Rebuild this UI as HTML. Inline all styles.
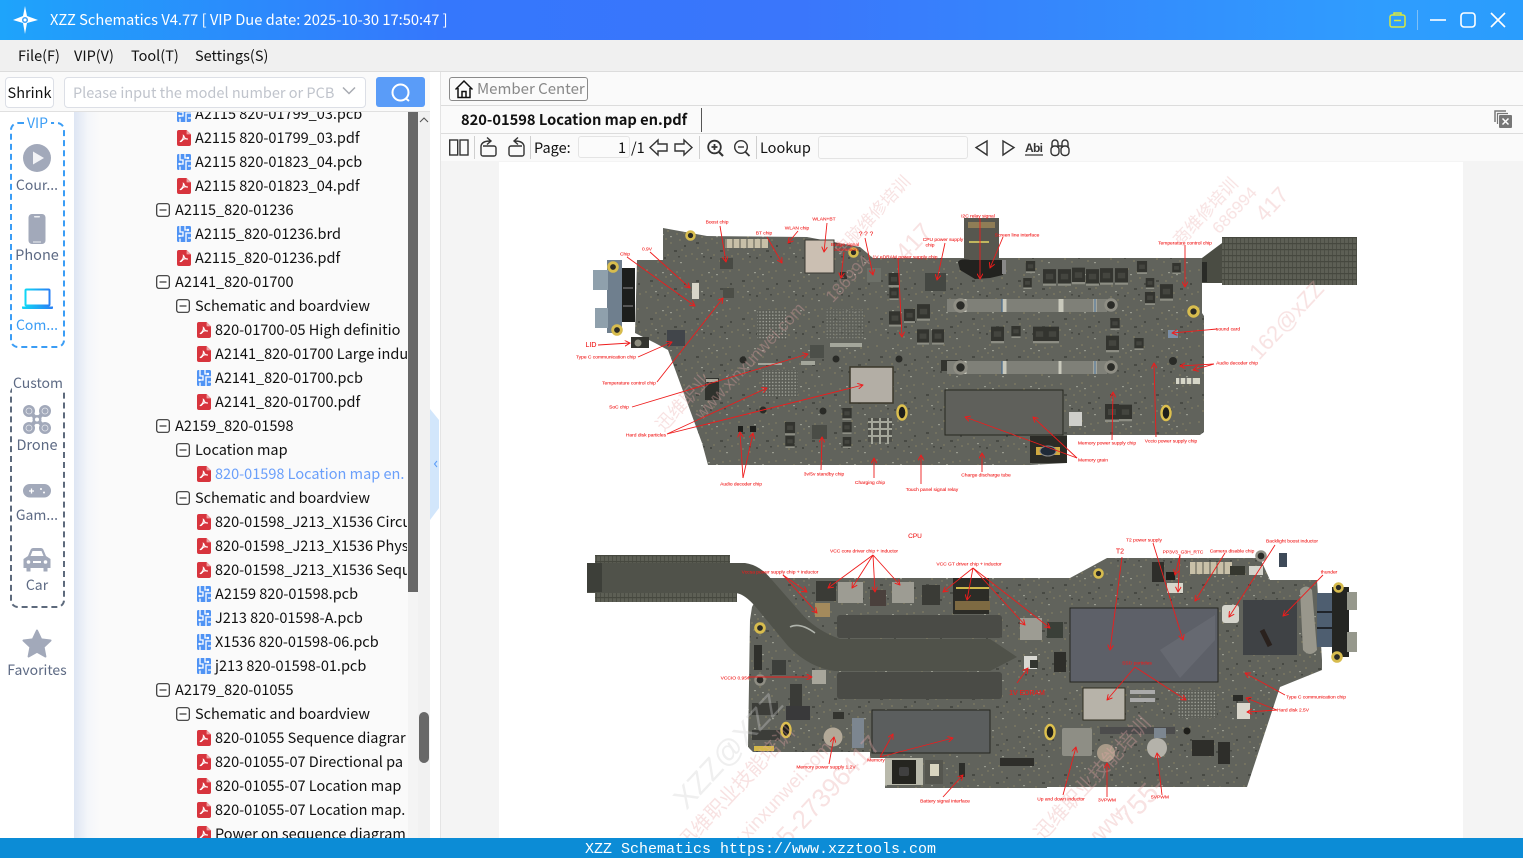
<!DOCTYPE html>
<html lang="en"><head><meta charset="utf-8"><title>XZZ Schematics</title>
<style>
html,body{margin:0;padding:0;width:1523px;height:858px;overflow:hidden;background:#fafafa}
body{font-family:"Noto Sans CJK SC","Liberation Sans",sans-serif;position:relative;font-size:14.5px;color:#111}
.a{position:absolute;white-space:nowrap}
.tree{position:absolute;left:0;top:112px;width:407px;height:726px;overflow:hidden}
.r{position:absolute;height:24px;line-height:24px;white-space:nowrap}
.r svg{position:absolute;top:4px;left:-18px}
.l0{left:175px}.l1{left:195px}.l2{left:215px}
.sl{position:absolute;width:74px;text-align:center;left:0;color:#5d6a84;font-size:14px;line-height:18px}
.tl{font-family:"Liberation Sans",sans-serif;fill:#f01c1c;stroke:#f01c1c;stroke-width:.08;font-size:4.9px;text-anchor:middle}
.wm{font-family:"Liberation Sans","Noto Sans CJK SC",sans-serif;fill:#e9a9a9;opacity:.34}
.ar{stroke:#ee1c1c;stroke-width:.9;marker-end:url(#ah);fill:none}
.ic{stroke:#333;fill:none;stroke-width:1.4}
</style></head><body>
<svg width="0" height="0" style="position:absolute"><defs>
<symbol id="pdf" viewBox="0 0 14 16"><path d="M2 0H9.6L14 4.4V14a2 2 0 0 1-2 2H2a2 2 0 0 1-2-2V2a2 2 0 0 1 2-2z" fill="#d7343d"/><path d="M9.6 0V4.4H14z" fill="#f0a0a4"/><path d="M6.4 5.5c.2 2-1 4.5-3 6 .8.6 2-1.500 3.100-2.300 1-.4 3-.6 4.300-.1-1.600.2-3.300-1-4-3.300z" fill="none" stroke="#fff" stroke-width="1.100"/></symbol>
<symbol id="pcb" viewBox="0 0 14 16"><rect width="14" height="16" rx="1.500" fill="#4f93f4"/><path d="M3 0V6H6V10H2M3 16V12.500M8 0V4H11M9 16V7H14M11 12H14" fill="none" stroke="#fff" stroke-width="1.300"/><circle cx="11" cy="4" r="1.200" fill="#fff"/><circle cx="2.500" cy="10" r="1.200" fill="#fff"/></symbol>
<symbol id="box" viewBox="0 0 14 14"><rect x=".7" y=".7" width="12.600" height="12.600" rx="2.200" fill="#fff" stroke="#333" stroke-width="1.200"/><path d="M3.500 7H10.500" stroke="#333" stroke-width="1.200"/></symbol>
<marker id="ah" viewBox="0 0 10 10" refX="9" refY="5" markerWidth="6" markerHeight="6" orient="auto" markerUnits="userSpaceOnUse"><path d="M0 0L9 5L0 10" fill="none" stroke="#ee1c1c" stroke-width="1.600"/></marker>
<pattern id="tx1" width="46" height="38" patternUnits="userSpaceOnUse">
<rect width="46" height="38" fill="#61635c"/>
<g fill="#c4b672"><circle cx="3" cy="4" r=".5"/><circle cx="12" cy="9" r=".5"/><circle cx="24" cy="3" r=".5"/><circle cx="36" cy="12" r=".5"/><circle cx="42" cy="28" r=".5"/><circle cx="18" cy="22" r=".5"/><circle cx="7" cy="31" r=".5"/><circle cx="30" cy="33" r=".5"/><circle cx="27" cy="15" r=".45"/><circle cx="14" cy="34" r=".45"/><circle cx="40" cy="5" r=".45"/><circle cx="8" cy="20" r=".45"/><circle cx="33" cy="6" r=".45"/><circle cx="22" cy="11" r=".45"/><circle cx="38" cy="22" r=".45"/><circle cx="24" cy="27" r=".45"/><circle cx="2" cy="26" r=".45"/><circle cx="16" cy="15" r=".45"/></g>
<g fill="#484a44"><rect x="6" y="14" width="3" height="2"/><rect x="30" y="22" width="3" height="2"/><rect x="20" y="29" width="2" height="2"/><rect x="40" y="17" width="2" height="2"/><rect x="13" y="28" width="2" height="1.500"/><rect x="34" y="28" width="2" height="1.500"/></g>
<g fill="#989a8e"><rect x="26" y="8" width="2" height="1.200"/><rect x="11" y="25" width="2" height="1.200"/><rect x="36" y="34" width="2" height="1.200"/><rect x="18" y="6" width="2" height="1.200"/></g>
</pattern>
<pattern id="bga" width="3.200" height="3.200" patternUnits="userSpaceOnUse"><rect width="3.200" height="3.200" fill="#5c5e57"/><circle cx="1.600" cy="1.600" r=".75" fill="#a4a69c"/></pattern>
<pattern id="fin" width="4" height="6" patternUnits="userSpaceOnUse"><rect width="4" height="6" fill="#5d5f55"/><rect width="1" height="6" fill="#4c4e45"/><rect y="3" width="4" height="1.200" fill="#46483f"/></pattern>
<symbol id="mos" viewBox="0 0 14 18"><rect width="14" height="18" fill="#33342f"/><rect width="14" height="2.500" y="15.500" fill="#8d8e84"/><rect x="3" y="5" width="8" height="6" fill="#44453f"/></symbol>
<symbol id="rng" viewBox="0 0 10 10"><circle cx="5" cy="5" r="3.600" fill="#2a2a26" stroke="#d7bc4e" stroke-width="2.400"/></symbol>
<symbol id="scr" viewBox="0 0 10 10"><circle cx="5" cy="5" r="4.800" fill="#8f8e84"/><circle cx="5" cy="5" r="2.800" fill="#2b2c28"/></symbol>
</defs></svg>

<!-- title bar -->
<div class="a" style="left:0;top:0;width:1523px;height:40px;background:linear-gradient(90deg,#1ea4fb 0,#3577fc 440px,#3a76fb 800px,#2f9dfe 1380px,#2a9dfd 1523px)"></div>
<svg class="a" style="left:12px;top:6px" width="27" height="28" viewBox="0 0 27 28"><path d="M13 0L15 10 26 14 15 17 13 28 11 17 1 14 11 10z" fill="#fff"/><circle cx="13" cy="14" r="3" fill="#3aa0f8"/><circle cx="13" cy="14" r="1.500" fill="#fff"/></svg>
<div class="a" style="left:50px;top:10px;color:#fff;font-size:14.7px;line-height:20px">XZZ Schematics V4.77 [ VIP Due date: 2025-10-30 17:50:47 ]</div>
<svg class="a" style="left:1388px;top:10px" width="20" height="20" viewBox="0 0 20 20" fill="none" stroke="#d8e83e" stroke-width="1.500"><rect x="2" y="5" width="15" height="12" rx="2"/><path d="M6 5V3h7v2M6 10.500h7"/></svg>
<div class="a" style="left:1417px;top:10px;width:1px;height:20px;background:#7fc0f6"></div>
<svg class="a" style="left:1428px;top:10px" width="85" height="20" viewBox="0 0 85 20" fill="none" stroke="#fff" stroke-width="1.600"><path d="M2 10H18"/><rect x="33" y="3" width="14" height="14" rx="3"/><path d="M63 3L77 17M77 3L63 17"/></svg>

<!-- menu -->
<div class="a" style="left:0;top:40px;width:1523px;height:31px;background:#f0f0f0;border-bottom:1px solid #dcdcdc"></div>
<div class="a" style="left:18px;top:46px;line-height:20px;font-size:14.500px">File(F)</div>
<div class="a" style="left:74px;top:46px;line-height:20px;font-size:14.500px">VIP(V)</div>
<div class="a" style="left:131px;top:46px;line-height:20px;font-size:14.500px">Tool(T)</div>
<div class="a" style="left:195px;top:46px;line-height:20px;font-size:14.500px">Settings(S)</div>

<!-- left toolbar -->
<div class="a" style="left:0;top:72px;width:431px;height:39px;background:#fafafa;border-bottom:1px solid #e0e0e0"></div>
<div class="a" style="left:5px;top:77px;width:47px;height:29px;border:1px solid #dcdfe6;border-radius:4px;background:#fff;text-align:center;line-height:29px;font-size:14.500px">Shrink</div>
<div class="a" style="left:64px;top:77px;width:300px;height:29px;border:1px solid #dcdfe6;border-radius:4px;background:#fff"></div>
<div class="a" style="left:73px;top:83px;line-height:20px;color:#c0c4cc;font-size:14.500px">Please input the model number or PCB</div>
<svg class="a" style="left:342px;top:86px" width="14" height="10" viewBox="0 0 14 10" fill="none" stroke="#a8abb2" stroke-width="1.500"><path d="M1 1.500L7 7.500 13 1.500"/></svg>
<div class="a" style="left:376px;top:77px;width:49px;height:30px;background:#5a9cf8;border-radius:3px"></div>
<svg class="a" style="left:390px;top:82px" width="22" height="22" viewBox="0 0 22 22" fill="none" stroke="#fff" stroke-width="2"><circle cx="10.500" cy="10.500" r="8"/><path d="M16 16.500L19 19"/></svg>

<!-- sidebar -->
<div class="a" style="left:0;top:112px;width:74px;height:726px;background:#fff"></div>
<div class="a" style="left:74px;top:112px;width:334px;height:726px;background:linear-gradient(90deg,#dde5f3 0,#f4f6fa 14px,#fafafa 26px)"></div>
<div class="a" style="left:10px;top:122px;width:51px;height:222px;border:2px dashed #3b9df5;border-radius:8px"></div>
<div class="a" style="left:24px;top:114px;width:27px;background:#fff;text-align:center;color:#3b9df5;font-size:14px;line-height:18px">VIP</div>
<svg class="a" style="left:23px;top:144px" width="28" height="28" viewBox="0 0 28 28"><circle cx="14" cy="14" r="14" fill="#a2a9ba"/><path d="M10 7.500L21 14 10 20.500z" fill="#f2f3f6"/></svg>
<div class="sl" style="top:176px">Cour...</div>
<svg class="a" style="left:28px;top:214px" width="18" height="31" viewBox="0 0 18 31"><rect x=".5" y="0" width="17" height="30" rx="3.500" fill="#a2a9ba"/><rect x="6" y="2" width="6" height="1.500" rx=".7" fill="#eceef2"/><rect x="5" y="27.500" width="8" height="1" fill="#eceef2"/></svg>
<div class="sl" style="top:246px;font-size:14.500px">Phone</div>
<svg class="a" style="left:22px;top:288px" width="31" height="22" viewBox="0 0 31 22"><defs><linearGradient id="lg" x1="0" x2="1"><stop offset="0" stop-color="#0fd6f5"/><stop offset="1" stop-color="#2a80f5"/></linearGradient></defs><rect x="3.500" y="1.500" width="24" height="16" rx="1" fill="none" stroke="url(#lg)" stroke-width="2"/><path d="M0 18.500H31V20a1 1 0 0 1-1 1H1a1 1 0 0 1-1-1z" fill="url(#lg)"/></svg>
<div class="sl" style="top:316px;color:#3b9df5">Com...</div>

<div class="a" style="left:10px;top:385px;width:51px;height:219px;border:2px dashed #5d6a7c;border-radius:8px"></div>
<div class="a" style="left:12px;top:374px;width:52px;background:#fff;text-align:center;color:#5d6a84;font-size:14px;line-height:18px">Custom</div>
<svg class="a" style="left:22px;top:404px" width="30" height="31" viewBox="0 0 30 31"><path d="M7 7L23 24M23 7L7 24" stroke="#a2a9ba" stroke-width="4"/><g fill="#a2a9ba"><circle cx="7" cy="7" r="6"/><circle cx="23" cy="7" r="6"/><circle cx="7" cy="24" r="6"/><circle cx="23" cy="24" r="6"/><circle cx="15" cy="15.500" r="4.500"/></g><g fill="none" stroke="#e4e6ec" stroke-width=".8"><circle cx="7" cy="7" r="3"/><circle cx="23" cy="7" r="3"/><circle cx="7" cy="24" r="3"/><circle cx="23" cy="24" r="3"/></g><circle cx="15" cy="15.500" r="2" fill="#fff"/></svg>
<div class="sl" style="top:436px;font-size:14.500px">Drone</div>
<svg class="a" style="left:23px;top:484px" width="28" height="14" viewBox="0 0 28 14"><rect width="28" height="13.500" rx="6.700" fill="#a2a9ba"/><path d="M6 7H11M8.500 4.500V9.500" stroke="#fff" stroke-width="1.300"/><circle cx="18" cy="5" r="1" fill="#fff"/><circle cx="21" cy="8.500" r="1" fill="#fff"/></svg>
<div class="sl" style="top:506px">Gam...</div>
<svg class="a" style="left:23px;top:548px" width="28" height="24" viewBox="0 0 28 24"><path d="M5 8L7.500 2a3 3 0 0 1 2.500-2h8a3 3 0 0 1 2.500 2L23 8l4.500 3V20h-3v3.500h-4V20H7.500v3.500h-4V20H.5V11z" fill="#a2a9ba"/><path d="M7.500 8L9.500 3H18.500L20.500 8z" fill="#fff"/><circle cx="5.500" cy="14" r="1.800" fill="#fff"/><circle cx="22.500" cy="14" r="1.800" fill="#fff"/><rect x="10" y="13" width="8" height="2" fill="#fff"/></svg>
<div class="sl" style="top:576px">Car</div>
<svg class="a" style="left:22px;top:629px" width="30" height="30" viewBox="0 0 30 30"><path d="M15 1.500L19.200 10.400 28.500 11.500 21.600 18 23.400 27.500 15 22.800 6.600 27.500 8.400 18 1.500 11.500 10.800 10.400z" fill="#a2a9ba" stroke="#a2a9ba" stroke-width="2" stroke-linejoin="round"/></svg>
<div class="sl" style="top:661px">Favorites</div>

<!-- tree -->
<div class="tree"><div style="position:absolute;left:0;top:-111px;width:407px;height:837px;overflow:hidden">
<div class="r l1" style="top:101px"><svg width="14" height="16"><use href="#pcb"/></svg>A2115 820-01799_03.pcb</div>
<div class="r l1" style="top:125px"><svg width="14" height="16"><use href="#pdf"/></svg>A2115 820-01799_03.pdf</div>
<div class="r l1" style="top:149px"><svg width="14" height="16"><use href="#pcb"/></svg>A2115 820-01823_04.pcb</div>
<div class="r l1" style="top:173px"><svg width="14" height="16"><use href="#pdf"/></svg>A2115 820-01823_04.pdf</div>
<div class="r l0" style="top:197px"><svg width="14" height="14" style="left:-19px;top:5px"><use href="#box"/></svg>A2115_820-01236</div>
<div class="r l1" style="top:221px"><svg width="14" height="16"><use href="#pcb"/></svg>A2115_820-01236.brd</div>
<div class="r l1" style="top:245px"><svg width="14" height="16"><use href="#pdf"/></svg>A2115_820-01236.pdf</div>
<div class="r l0" style="top:269px"><svg width="14" height="14" style="left:-19px;top:5px"><use href="#box"/></svg>A2141_820-01700</div>
<div class="r l1" style="top:293px"><svg width="14" height="14" style="left:-19px;top:5px"><use href="#box"/></svg>Schematic and boardview</div>
<div class="r l2" style="top:317px"><svg width="14" height="16"><use href="#pdf"/></svg>820-01700-05 High definitio</div>
<div class="r l2" style="top:341px"><svg width="14" height="16"><use href="#pdf"/></svg>A2141_820-01700 Large indu</div>
<div class="r l2" style="top:365px"><svg width="14" height="16"><use href="#pcb"/></svg>A2141_820-01700.pcb</div>
<div class="r l2" style="top:389px"><svg width="14" height="16"><use href="#pdf"/></svg>A2141_820-01700.pdf</div>
<div class="r l0" style="top:413px"><svg width="14" height="14" style="left:-19px;top:5px"><use href="#box"/></svg>A2159_820-01598</div>
<div class="r l1" style="top:437px"><svg width="14" height="14" style="left:-19px;top:5px"><use href="#box"/></svg>Location map</div>
<div class="r l2" style="top:461px;color:#6a9ffa"><svg width="14" height="16"><use href="#pdf"/></svg>820-01598 Location map en.</div>
<div class="r l1" style="top:485px"><svg width="14" height="14" style="left:-19px;top:5px"><use href="#box"/></svg>Schematic and boardview</div>
<div class="r l2" style="top:509px"><svg width="14" height="16"><use href="#pdf"/></svg>820-01598_J213_X1536 Circu</div>
<div class="r l2" style="top:533px"><svg width="14" height="16"><use href="#pdf"/></svg>820-01598_J213_X1536 Physi</div>
<div class="r l2" style="top:557px"><svg width="14" height="16"><use href="#pdf"/></svg>820-01598_J213_X1536 Sequ</div>
<div class="r l2" style="top:581px"><svg width="14" height="16"><use href="#pcb"/></svg>A2159 820-01598.pcb</div>
<div class="r l2" style="top:605px"><svg width="14" height="16"><use href="#pcb"/></svg>J213 820-01598-A.pcb</div>
<div class="r l2" style="top:629px"><svg width="14" height="16"><use href="#pcb"/></svg>X1536 820-01598-06.pcb</div>
<div class="r l2" style="top:653px"><svg width="14" height="16"><use href="#pcb"/></svg>j213 820-01598-01.pcb</div>
<div class="r l0" style="top:677px"><svg width="14" height="14" style="left:-19px;top:5px"><use href="#box"/></svg>A2179_820-01055</div>
<div class="r l1" style="top:701px"><svg width="14" height="14" style="left:-19px;top:5px"><use href="#box"/></svg>Schematic and boardview</div>
<div class="r l2" style="top:725px"><svg width="14" height="16"><use href="#pdf"/></svg>820-01055 Sequence diagrar</div>
<div class="r l2" style="top:749px"><svg width="14" height="16"><use href="#pdf"/></svg>820-01055-07 Directional pa</div>
<div class="r l2" style="top:773px"><svg width="14" height="16"><use href="#pdf"/></svg>820-01055-07 Location map</div>
<div class="r l2" style="top:797px"><svg width="14" height="16"><use href="#pdf"/></svg>820-01055-07 Location map.</div>
<div class="r l2" style="top:821px"><svg width="14" height="16"><use href="#pdf"/></svg>Power on sequence diagram</div>
</div></div>

<!-- scrollbars -->
<div class="a" style="left:408px;top:112px;width:10px;height:480px;background:#686868"></div>
<div class="a" style="left:408px;top:592px;width:10px;height:246px;background:#f4f4f4"></div>
<div class="a" style="left:418px;top:112px;width:12px;height:726px;background:#f1f1f1"></div>
<svg class="a" style="left:419px;top:116px" width="10" height="8" viewBox="0 0 10 8" fill="none" stroke="#555" stroke-width="1.100"><path d="M1 6L5 2 9 6"/></svg>
<div class="a" style="left:419px;top:712px;width:10px;height:51px;border-radius:5px;background:#686868"></div>
<div class="a" style="left:430px;top:72px;width:11px;height:766px;background:#fff;border-right:1px solid #e4e4e4;box-sizing:border-box"></div>
<svg class="a" style="left:430px;top:406px" width="11" height="116" viewBox="0 0 11 116"><path d="M0 3L9 14V102L0 114z" fill="#d2e6fb"/><path d="M7 55L4.500 58 7 61" fill="none" stroke="#5a9cf8" stroke-width="1"/></svg>

<!-- right panel -->
<div class="a" style="left:441px;top:72px;width:1082px;height:33px;background:#fafafa;border-bottom:1px solid #dcdcdc"></div>
<div class="a" style="left:449px;top:77px;width:137px;height:22px;border:1px solid #8a8a8a;border-radius:3px;background:#fbfbfb"></div>
<svg class="a" style="left:454px;top:79px" width="20" height="20" viewBox="0 0 20 20" fill="none" stroke="#111" stroke-width="1.500"><path d="M1.500 10.500L10 2l8.500 8.500M4 9V18.500H16V9M8 18.500V12.500H12V18.500"/></svg>
<div class="a" style="left:477px;top:79px;line-height:20px;color:#888;font-size:15px">Member Center</div>
<div class="a" style="left:441px;top:106px;width:1082px;height:27px;background:#fafafa;border-bottom:1px solid #dcdcdc"></div>
<div class="a" style="left:461px;top:110px;line-height:20px;font-weight:bold;font-size:14.650px;color:#111">820-01598 Location map en.pdf</div>
<div class="a" style="left:701px;top:108px;width:1px;height:24px;background:#555"></div>
<svg class="a" style="left:1494px;top:110px" width="18" height="18" viewBox="0 0 18 18"><path d="M1 12V1H12" fill="none" stroke="#777" stroke-width="1.500"/><path d="M3.500 14V3.500H14" fill="none" stroke="#777" stroke-width="1.200"/><rect x="5" y="5" width="13" height="13" rx="1" fill="#777"/><path d="M8.500 8.500L14.500 14.500M14.500 8.500L8.500 14.500" stroke="#fff" stroke-width="1.500"/></svg>

<!-- pdf toolbar -->
<div class="a" style="left:441px;top:134px;width:1082px;height:27px;background:#fafafa"></div>
<svg class="a" style="left:441px;top:134px" width="640" height="27" viewBox="441 134 640 27">
<g class="ic"><rect x="449.700" y="140" width="8" height="15"/><rect x="460" y="140" width="8" height="15"/>
<path d="M483 146H494a2 2 0 0 1 2 2V154a2 2 0 0 1-2 2H483a2 2 0 0 1-2-2V146Q482 141 490 141M487 137.500L491 141 487 144.500"/>
<path d="M522 146H511a2 2 0 0 0-2 2V154a2 2 0 0 0 2 2H522a2 2 0 0 0 2-2V146Q523 141 515 141M518 137.500L514 141 518 144.500"/>
<path d="M667 144H658V140L650 147.500 658 155V151H667z"/><path d="M675 144H684V140L692 147.500 684 155V151H675z"/>
<circle cx="714.500" cy="147" r="6.300" stroke-width="1.800"/><path d="M719 152L723 156" stroke-width="2.200"/><path d="M711.500 147H717.500M714.500 144V150" stroke-width="1.800"/>
<circle cx="741" cy="147" r="6.300"/><path d="M745.500 152L749.500 156" stroke-width="1.800"/><path d="M738 147H744"/>
<path d="M987 141L976 147.500 987 155z"/><path d="M1003 141L1014 147.500 1003 155z"/>
<rect x="1051" y="146" width="8" height="9.500" rx="3.500"/><rect x="1061" y="146" width="8" height="9.500" rx="3.500"/><path d="M1052 148V143a3 3 0 0 1 6 0V148M1062 148V143a3 3 0 0 1 6 0V148M1058 146H1062"/></g>
<path d="M474.500 136V159M530.500 136V159M699.500 136V159M756.500 136V159" stroke="#cfcfcf"/>
<text x="1025" y="152" font-family="Liberation Sans" font-size="12" font-weight="bold" fill="#333" textLength="18">Abi</text>
<path d="M1025 155H1043" stroke="#333" stroke-width="1.200"/>
</svg>
<div class="a" style="left:534px;top:138px;line-height:20px;font-size:14.500px">Page:</div>
<div class="a" style="left:578px;top:136px;width:47px;height:20px;border:1px solid #e4e4e4;border-radius:3px;background:#fbfbfb;line-height:22px;text-align:right;padding-right:3px;box-sizing:content-box;font-size:14.500px">1</div>
<div class="a" style="left:631px;top:138px;line-height:20px;font-size:14.500px">/1</div>
<div class="a" style="left:760px;top:138px;line-height:20px;font-size:14.500px">Lookup</div>
<div class="a" style="left:818px;top:136px;width:148px;height:21px;border:1px solid #e4e4e4;border-radius:3px;background:#fbfbfb"></div>

<!-- pdf view -->
<div class="a" style="left:441px;top:161px;width:1082px;height:677px;background:#f4f4f4"></div>
<div class="a" style="left:499px;top:162px;width:964px;height:676px;background:#fff"></div>
<svg class="a" style="left:0;top:0;pointer-events:none" width="1523" height="838" viewBox="0 0 1523 838">
<defs><clipPath id="pg"><rect x="499" y="162" width="964" height="676"/></clipPath></defs>
<g clip-path="url(#pg)"><g style="filter:blur(.3px)">
<!-- ===== TOP BOARD ===== -->
<path d="M663 228L707 236 807 237 860 247 873 258H1202V313L1204 316V432L1200 435H1067V463L1030 465H708L702 443 668 350 655 343 635 333 637 260H663z" fill="url(#tx1)"/>
<!-- left connector -->
<rect x="622" y="268" width="13" height="54" fill="#1c1e1c"/><rect x="623" y="287" width="10" height="2" fill="#555"/><rect x="623" y="305" width="10" height="2" fill="#555"/>
<path d="M607 260H622V333H607z" fill="#6f7f8e"/><rect x="593" y="270" width="15" height="20" fill="#8fa0ac"/><rect x="595" y="308" width="13" height="20" fill="#8fa0ac"/>
<use href="#rng" x="607" y="261" width="12" height="12"/><use href="#rng" x="611" y="324" width="12" height="12"/>
<rect x="631" y="337" width="18" height="11" fill="#33342f"/><circle cx="638" cy="343" r="3.500" fill="#8c8c7e"/>
<!-- chips -->
<rect x="667" y="330" width="18" height="16" fill="#41454a"/>
<rect x="725" y="239" width="43" height="9" fill="#c8c0a8"/>
<path d="M726 239v9M733 239v9M740 239v9M747 239v9M754 239v9M761 239v9" stroke="#57584e" stroke-width="1"/>
<rect x="692" y="283" width="7" height="16" fill="#d7d5c8"/>
<rect x="720" y="258" width="13" height="11" fill="#484a44"/>
<rect x="723" y="288" width="11" height="10" fill="#4c4e47"/>
<rect x="805" y="240" width="29" height="33" fill="#cbbfb2" stroke="#3a3a33"/>
<rect x="840" y="272" width="7" height="7" fill="#33342f"/><rect x="867" y="268" width="14" height="14" fill="#6d7068"/>
<rect x="925" y="273" width="21" height="18" fill="#444742"/>
<rect x="757" y="310" width="30" height="30" fill="url(#bga)"/><rect x="826" y="309" width="38" height="30" fill="url(#bga)" opacity=".55"/>
<rect x="762" y="370" width="36" height="27" fill="url(#bga)"/>
<rect x="810" y="345" width="14" height="13" fill="#4c4f49"/>
<rect x="850" y="367" width="43" height="36" fill="#b3aea5" stroke="#3a372a" stroke-width="1.500"/>
<rect x="830" y="343" width="32" height="4" fill="#a4a69b"/><rect x="758" y="363" width="24" height="2" fill="#a4a69b"/><rect x="801" y="361" width="14" height="4" fill="#a4a69b"/>
<rect x="705" y="378" width="14" height="22" fill="#30322d"/><rect x="706" y="379" width="12" height="3" fill="#a9a99c"/>
<!-- mosfets -->
<g><use href="#mos" x="888" y="273" width="12" height="14"/><use href="#mos" x="888" y="288" width="12" height="12"/><use href="#mos" x="889" y="310" width="12" height="18"/><use href="#mos" x="904" y="306" width="11" height="20"/><use href="#mos" x="917" y="302" width="13" height="21"/><use href="#mos" x="917" y="327" width="12" height="20"/><use href="#mos" x="932" y="327" width="12" height="20"/>
<use href="#mos" x="779" y="422" width="22" height="13"/><use href="#mos" x="779" y="436" width="22" height="12"/><use href="#mos" x="836" y="408" width="22" height="12"/><use href="#mos" x="836" y="422" width="22" height="12"/><use href="#mos" x="836" y="437" width="22" height="11"/>
<rect x="812" y="425" width="15" height="14" fill="#4a4c46"/><rect x="738" y="426" width="5" height="6" fill="#1e1f1c"/><rect x="750" y="426" width="6" height="6" fill="#1e1f1c"/>
<rect x="868" y="418" width="24" height="24" fill="#4f504a"/><path d="M868 422h24M868 429h24M868 436h24M872 418v26M880 418v26M888 418v26" stroke="#a4a69a" stroke-width="2"/>
<rect x="941" y="360" width="22" height="11" fill="#33342f"/>
<use href="#mos" x="1020" y="261" width="21" height="12"/><use href="#mos" x="1017" y="278" width="21" height="11"/><use href="#mos" x="1043" y="267" width="13" height="21"/><use href="#mos" x="1058" y="267" width="13" height="21"/><use href="#mos" x="1072" y="265" width="13" height="22"/><use href="#mos" x="1086" y="267" width="13" height="21"/><use href="#mos" x="1100" y="266" width="13" height="21"/><use href="#mos" x="1115" y="266" width="13" height="21"/>
<use href="#mos" x="1131" y="261" width="22" height="13"/><use href="#mos" x="1140" y="278" width="20" height="11"/><use href="#mos" x="1140" y="292" width="20" height="13"/><use href="#mos" x="1160" y="282" width="13" height="21"/><use href="#mos" x="1166" y="263" width="21" height="11"/>
<use href="#mos" x="991" y="325" width="13" height="20"/><use href="#mos" x="1006" y="326" width="20" height="12"/><use href="#mos" x="1033" y="325" width="13" height="20"/><use href="#mos" x="1046" y="325" width="13" height="20"/><use href="#mos" x="1106" y="318" width="18" height="12"/><use href="#mos" x="1106" y="334" width="13" height="20"/><use href="#mos" x="1129" y="338" width="20" height="12"/>
<use href="#mos" x="1105" y="403" width="14" height="20"/><use href="#mos" x="1119" y="403" width="13" height="20"/></g>
<!-- bars -->
<rect x="947" y="299" width="160" height="13" fill="#7f8078"/><rect x="947" y="361" width="160" height="13" fill="#7f8078"/>
<path d="M965 299v13M1003 299v13M1005 299v13M1060 299v13M1062 299v13M1095 299v13M965 361v13M1003 361v13M1005 361v13M1060 361v13M1095 361v13" stroke="#c9c9bc" stroke-width="3"/>
<path d="M1002 299v13M1002 361v13M1095 299v13M1095 361v13" stroke="#4a6b8c" stroke-width="1.300"/>
<use href="#scr" x="953" y="298" width="15" height="15"/><use href="#scr" x="1104" y="298" width="14" height="14"/><use href="#scr" x="953" y="360" width="15" height="15"/><use href="#scr" x="1104" y="360" width="14" height="14"/>
<rect x="945" y="390" width="118" height="45" fill="#5f605b" stroke="#26271f"/>
<rect x="1030" y="436" width="37" height="27" fill="#2b2b26"/><rect x="1036" y="447" width="24" height="8" fill="#cfa840"/><ellipse cx="1048" cy="451" rx="8" ry="5" fill="#1f2a38" stroke="#888"/>
<!-- flex -->
<rect x="964" y="218" width="35" height="42" fill="#57574f"/><rect x="968" y="222" width="27" height="6" fill="#8f7d56"/><rect x="969" y="241" width="20" height="2" fill="#c0b65e"/>
<path d="M958 262Q960 258 970 260H1003V275L990 278 975 279 960 270z" fill="#22221f"/>
<rect x="1002" y="260" width="4" height="14" fill="#888"/>
<!-- rings -->
<use href="#rng" x="685" y="230" width="11" height="11"/><use href="#rng" x="848" y="247" width="11" height="11"/>
<ellipse cx="902" cy="412.500" rx="4.500" ry="7" fill="#1f1f1c" stroke="#ddc04e" stroke-width="2.400"/><ellipse cx="1166" cy="413" rx="4.500" ry="7" fill="#1f1f1c" stroke="#ddc04e" stroke-width="2.400"/>
<use href="#rng" x="1187" y="305" width="13" height="13"/>
<g fill="#2a2b27"><circle cx="743" cy="360" r="3.500"/><circle cx="836" cy="359" r="3.500"/><circle cx="899" cy="359" r="3.500"/><circle cx="763" cy="410" r="3.500"/><circle cx="823" cy="411" r="3.500"/><circle cx="1173" cy="361" r="4"/></g>
<rect x="1168" y="330" width="10" height="8" fill="#7b8fa8"/>
<path d="M1176 378h24v6h-24z" fill="#d6d6c8"/><path d="M1180 378v6M1186 378v6M1192 378v6" stroke="#333"/>
<rect x="1069" y="412" width="13" height="14" fill="#cfcfca"/>
<!-- heat pipe -->
<path d="M1202 258L1222 243V283H1202z" fill="#4a4c43"/>
<rect x="1202" y="262" width="5" height="20" fill="#2a2b27"/><rect x="1222" y="237" width="135" height="48" fill="url(#fin)"/>

<!-- ===== BOTTOM BOARD ===== -->
<path d="M752 607L767 578H1070L1107 558H1260L1270 580H1317L1322 660V670L1280 687 1247 787H1047V788H885V758H870V752H753L748 747 750 620z" fill="url(#tx1)"/>
<rect x="885" y="758" width="38" height="27" fill="#b9b9ab"/><rect x="892" y="760" width="24" height="24" fill="#252520"/><rect x="899" y="767" width="10" height="9" rx="2" fill="#404040"/><rect x="925" y="760" width="18" height="24" fill="#55564f"/><rect x="930" y="764" width="9" height="12" fill="#d9d5c0"/>
<rect x="959" y="763" width="6" height="14" fill="#2d2e2a"/>
<!-- heatsink -->
<rect x="595" y="555" width="135" height="8" fill="url(#fin)"/><rect x="595" y="593" width="142" height="9" fill="url(#fin)"/>
<path d="M587 563H745Q760 565 772 580L800 612Q815 630 840 639H990L1017 657 990 671H835Q810 668 788 646L760 612Q745 593 735 593H587z" fill="#50524a"/>
<path d="M587 563H602V592H587z" fill="#3d3f39"/>
<path d="M790 627Q800 622 815 633" stroke="#b0b4ac" stroke-width="1.500" fill="none"/>
<rect x="837" y="615" width="165" height="23" rx="3" fill="#4a4b46"/><rect x="837" y="672" width="165" height="27" rx="3" fill="#4a4b46"/>
<!-- parts bottom -->
<rect x="815" y="603" width="15" height="14" fill="#a48a5c"/>
<rect x="838" y="582" width="25" height="21" fill="#9d9c93"/><rect x="892" y="582" width="22" height="21" fill="#9d9c93"/><rect x="816" y="581" width="20" height="20" fill="#3a3b36"/><rect x="870" y="590" width="16" height="16" fill="#4a403c"/><rect x="922" y="585" width="18" height="20" fill="#3a3b36"/>
<rect x="953" y="578" width="36" height="36" fill="#2c2c27"/><rect x="956" y="587" width="33" height="2" fill="#cdb84a"/><rect x="955" y="601" width="35" height="9" fill="#7e6a42"/>
<rect x="1020" y="618" width="22" height="22" fill="#9d9c93"/><rect x="1047" y="622" width="16" height="16" fill="#3a3f38"/>
<rect x="1024" y="656" width="13" height="13" fill="#d8d8d3"/><rect x="1030" y="660" width="8" height="8" fill="#33352f"/><rect x="1054" y="652" width="12" height="20" fill="#2e2e2a"/>
<rect x="1070" y="608" width="148" height="74" fill="#5d6068" stroke="#25261f"/><path d="M1160 650L1215 615V640L1180 678z" fill="#6d7078" opacity=".6"/>
<rect x="1083" y="688" width="42" height="32" fill="#b7b3a9" stroke="#2f2c20"/>
<rect x="1178" y="690" width="39" height="28" fill="url(#bga)"/>
<rect x="1130" y="690" width="25" height="4" fill="#aaa"/><rect x="1130" y="698" width="25" height="4" fill="#aaa"/>
<rect x="872" y="710" width="118" height="43" fill="#5b5e5e" stroke="#25261f"/>
<rect x="1243" y="600" width="54" height="55" fill="#3f4245"/><path d="M1262 630l8 16" stroke="#2a211d" stroke-width="5"/>
<rect x="1222" y="605" width="17" height="18" rx="3" fill="#d5d4cc"/>
<rect x="1062" y="728" width="30" height="28" rx="2" fill="#8e8e85"/>
<circle cx="1106" cy="753" r="9" fill="#a89a88"/><circle cx="833" cy="737" r="9.500" fill="#b3a998"/><circle cx="1157" cy="748" r="10" fill="#b4b2aa"/>
<rect x="812" y="670" width="14" height="14" fill="#a8a69b"/><rect x="772" y="660" width="14" height="15" fill="#3d3f3b"/><rect x="754" y="645" width="8" height="25" fill="#2f302c"/><rect x="752" y="703" width="26" height="12" fill="#3c3d39"/><rect x="752" y="730" width="28" height="10" fill="#3c3d39"/>
<rect x="754" y="746" width="20" height="5" fill="#d4b84a"/>
<rect x="852" y="718" width="12" height="30" fill="#7c8690"/><rect x="833" y="712" width="11" height="7" fill="#33342f"/>
<rect x="786" y="706" width="24" height="14" fill="#39393a"/><rect x="790" y="684" width="12" height="22" fill="#3a3b37"/>
<rect x="1100" y="727" width="75" height="7" fill="#4c4c4c"/><rect x="1154" y="728" width="12" height="10" fill="#7c8690"/>
<rect x="1192" y="740" width="22" height="16" fill="#2e2e2a"/><rect x="1218" y="742" width="12" height="22" fill="#2e2e2a"/><rect x="1000" y="758" width="34" height="8" fill="#2e2e2a"/>
<rect x="1190" y="562" width="42" height="12" fill="#c8c0a8"/><path d="M1196 562v12M1203 562v12M1210 562v12M1217 562v12M1224 562v12" stroke="#57584e"/>
<rect x="1152" y="562" width="12" height="20" fill="#2e2e2a"/><rect x="1166" y="572" width="9" height="8" fill="#1e1f1c"/><rect x="1167" y="583" width="16" height="10" fill="#d8d7cc"/>
<rect x="1230" y="566" width="15" height="9" fill="#35372f"/><rect x="1249" y="566" width="14" height="9" fill="#d5d4cc"/><rect x="1279" y="553" width="8" height="14" fill="#3e4a58"/>
<rect x="1237" y="703" width="13" height="16" fill="#dad7cc"/><rect x="1233" y="695" width="10" height="6" fill="#2a2b27"/>
<!-- right connector -->
<path d="M1300 590Q1306 583 1312 590L1317 650Q1310 658 1303 650z" fill="#99978c"/>
<rect x="1317" y="593" width="15" height="54" fill="#4e5e70"/><path d="M1317 612h15M1317 628h15" stroke="#20242a" stroke-width="2"/>
<rect x="1332" y="587" width="17" height="70" fill="#242522"/><rect x="1347" y="592" width="10" height="18" fill="#96988c"/><rect x="1347" y="632" width="10" height="20" fill="#96988c"/>
<use href="#rng" x="1333" y="582" width="11" height="11"/><use href="#rng" x="1331" y="651" width="12" height="12"/>
<!-- rings -->
<use href="#rng" x="754" y="622" width="12" height="12"/><use href="#rng" x="1093" y="568" width="11" height="11"/><use href="#scr" x="1255" y="550" width="12" height="12"/>
<ellipse cx="786" cy="730" rx="4.500" ry="7" fill="#1f1f1c" stroke="#ddc04e" stroke-width="2.400"/><ellipse cx="1050" cy="732" rx="4.500" ry="7" fill="#1f1f1c" stroke="#ddc04e" stroke-width="2.400"/>
<circle cx="1187" cy="731" r="3.500" fill="#1e1e1a"/><use href="#scr" x="754" y="674" width="12" height="12"/>

<!-- watermarks -->
<g class="wm">
<g transform="rotate(-47 890 220)"><text x="830" y="210" font-size="17">电脑维修培训</text><text x="790" y="235" font-size="17">186994</text><text x="870" y="260" font-size="24">417</text></g>
<g transform="rotate(-47 1240 220)"><text x="1180" y="195" font-size="17">商维修培训</text><text x="1215" y="215" font-size="17">686994</text><text x="1255" y="240" font-size="22">417</text><text x="1150" y="330" font-size="22">162@xZZ</text></g>
<g transform="rotate(-47 680 400)"><text x="645" y="410" font-size="18">迅维职业</text><text x="680" y="430" font-size="17">www.xinxunwei.com</text></g>
<g transform="rotate(-47 720 760)"><text x="660" y="770" font-size="30" fill="#cfcfcf">XZZ@XZZ</text></g>
<g transform="rotate(-47 720 800)"><text x="660" y="810" font-size="20">迅维职业技能培训</text></g>
<g transform="rotate(-47 730 830)"><text x="690" y="850" font-size="19">www.xinxunwei.com</text></g>
<g transform="rotate(-47 760 840)"><text x="730" y="865" font-size="26">0755-27396417</text></g>
<g transform="rotate(-47 1060 830)"><text x="1040" y="825" font-size="20">迅维职业技能培训</text></g>
<g transform="rotate(-47 1090 840)"><text x="1080" y="850" font-size="24">www.</text><text x="1125" y="860" font-size="28">755-</text></g>
</g>
</g>

<!-- labels top -->
<g class="tl">
<text x="717" y="223.500">Boost chip</text><text x="764" y="234.500">BT chip</text><text x="797" y="229.500">WLAN chip</text><text x="824" y="220.500">WLAN+BT</text>
<text x="845" y="246">Bridge signal</text><text x="846" y="251">conversion</text>
<text x="866" y="236" style="font-size:6.500px">? ? ?</text><text x="943" y="241">CPU power supply</text><text x="930" y="246.500">chip</text>
<text x="905" y="258.500">1V eDRAM power supply chip</text><text x="978" y="217.500">I2C relay signal</text><text x="1017" y="236.500">Screen line interface</text>
<text x="1185" y="244.500">Temperature control chip</text><text x="1228" y="330.500">sound card</text><text x="1237" y="364.500">Audio decoder chip</text>
<text x="1171" y="442.500">Vccio power supply chip</text><text x="1107" y="444.500">Memory power supply chip</text><text x="1093" y="461.500">Memory grain</text>
<text x="986" y="476.500">Charge discharge tube</text><text x="932" y="491">Touch panel signal relay</text><text x="870" y="484">Charging chip</text><text x="824" y="475.500">3v/5v standby chip</text>
<text x="741" y="485.500">Audio decoder chip</text><text x="646" y="436.500">Hard disk particles</text><text x="619" y="408.500">SoC chip</text><text x="629" y="384.500">Temperature control chip</text>
<text x="606" y="358.500">Type C communication chip</text><text x="591" y="347" style="font-size:7px">LID</text><text x="625" y="255.500">Chip</text><text x="647" y="250.500">0.9V</text>
<!-- labels bottom -->
<text x="915" y="538" style="font-size:6.500px">CPU</text><text x="864" y="552.500">VCC core driver chip + inductor</text><text x="969" y="565.500">VCC GT driver chip + inductor</text><text x="780" y="573.500">Vccsa power supply chip + inductor</text>
<text x="735" y="679.500">VCCIO 0.95v</text><text x="826" y="768.500">Memory power supply 1.2V</text><text x="876" y="761.500">Memory</text><text x="945" y="802.500">Battery signal interface</text>
<text x="1120" y="553.500" style="font-size:7px">T2</text><text x="1144" y="541.500">T2 power supply</text><text x="1183" y="553.500">PP3V3_G3H_RTC</text><text x="1232" y="552.500">Camera disable chip</text>
<text x="1292" y="542.500">Backlight boost inductor</text><text x="1329" y="573.500">thunder</text><text x="1137" y="664.500">SSD particles</text><text x="1316" y="698.500">Type C communication chip</text>
<text x="1293" y="711.500">Hard disk 2.5V</text><text x="1027" y="695" style="font-size:7px">1V EDRAM</text><text x="1061" y="800.500">Up and down inductor</text><text x="1107" y="801.500">3VPWM</text><text x="1160" y="798.500">5VPWM</text>
</g>
<!-- arrows -->
<g class="ar">
<path d="M720 226L726 262"/><path d="M767 237L782 263"/><path d="M798 231L788 243"/><path d="M827 223L824 252"/><path d="M844 252L841 278"/><path d="M865 238L873 275"/><path d="M945 243L937 280"/><path d="M898 258L902 337"/><path d="M980 218L980 279"/><path d="M1003 237L990 268"/><path d="M1185 245L1185 287"/><path d="M1217 329L1172 333"/><path d="M1214 364L1180 366"/><path d="M1214 364L1193 370"/><path d="M1156 437L1154 363"/><path d="M1112 440L1113 392"/><path d="M1077 458L965 417"/><path d="M1077 458L1033 417"/><path d="M982 472L982 453"/><path d="M921 484L921 455"/><path d="M874 478L874 458"/><path d="M821 470L822 437"/><path d="M743 478L740 432"/><path d="M743 478L753 433"/><path d="M667 434L767 388"/><path d="M667 434L863 385"/><path d="M632 407L808 354"/><path d="M657 382L723 298"/><path d="M638 357L672 342"/><path d="M598 345L630 343"/><path d="M627 257L695 306"/><path d="M650 252L690 288"/>
<path d="M873 555L828 588"/><path d="M873 555L852 588"/><path d="M873 555L875 592"/><path d="M873 555L900 585"/><path d="M973 568L943 592"/><path d="M973 568L967 600"/><path d="M973 568L1025 625"/><path d="M973 568L1050 628"/><path d="M783 575L807 592"/><path d="M783 575L817 613"/><path d="M748 677L812 677"/><path d="M829 764L834 737"/><path d="M880 757L893 734"/><path d="M880 757L953 738"/><path d="M943 797L963 775"/><path d="M1122 557L1110 650"/><path d="M1153 543L1183 640"/><path d="M1180 555L1175 575"/><path d="M1180 555L1178 592"/><path d="M1225 553L1195 601"/><path d="M1275 545L1229 617"/><path d="M1323 575L1283 616"/><path d="M1135 667L1107 700"/><path d="M1135 667L1186 700"/><path d="M1285 695L1245 673"/><path d="M1277 710L1246 698"/><path d="M1277 710L1247 712"/><path d="M1017 683L1028 668"/><path d="M1063 795L1076 747"/><path d="M1107 797L1107 763"/><path d="M1162 795L1157 753"/>
</g>
</g></svg>

<!-- status -->
<div class="a" style="left:0;top:838px;width:1523px;height:20px;background:#0c8cd6"></div>
<div class="a" style="left:585px;top:841px;height:17px;line-height:17px;color:#fff;font-family:'Liberation Mono',monospace;font-size:15px">XZZ Schematics https://www.xzztools.com</div>
</body></html>
